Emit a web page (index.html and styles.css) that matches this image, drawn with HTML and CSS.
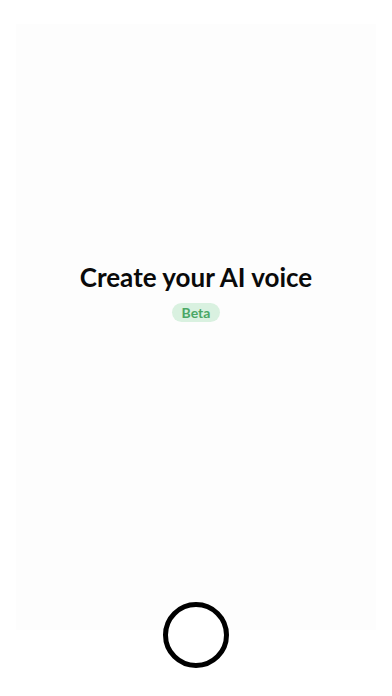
FILE: index.html
```html
<!DOCTYPE html>
<html>
<head>
<meta charset="utf-8">
<link rel="stylesheet" href="styles.css">
</head>
<body>
<div class="screen">
  <div class="panel">
    <h1 class="title">Create your AI voice</h1>
    <span class="badge">Beta</span>
  </div>
  <div class="footer">
    <button class="record" aria-label="Record"></button>
  </div>
</div>
</body>
</html>
```
FILE: styles.css
```css
html, body {
  margin: 0;
  padding: 0;
  background: #ffffff;
}
.screen {
  width: 392px;
  height: 696px;
  box-sizing: border-box;
  padding: 24px 16px 0;
  display: flex;
  flex-direction: column;
  font-family: Lato, "Noto Sans", sans-serif;
}
.panel {
  height: 606px;
  background: #fdfdfd;
  display: flex;
  flex-direction: column;
  align-items: center;
  padding-top: 237px;
  box-sizing: border-box;
}
.title {
  margin: 0;
  font-size: 26px;
  line-height: 32px;
  font-weight: 700;
  color: #0a0a0a;
}
.badge {
  margin-top: 10px;
  height: 19px;
  width: 48px;
  border-radius: 9.5px;
  background: #d9f1e0;
  color: #4aa765;
  font-size: 14px;
  font-weight: 700;
  line-height: 19px;
  text-align: center;
}
.footer {
  display: flex;
  justify-content: center;
  margin-top: -28px;
}
.record {
  width: 66px;
  height: 66px;
  box-sizing: border-box;
  border: 5px solid #000000;
  border-radius: 50%;
  background: #ffffff;
  padding: 0;
}
```
